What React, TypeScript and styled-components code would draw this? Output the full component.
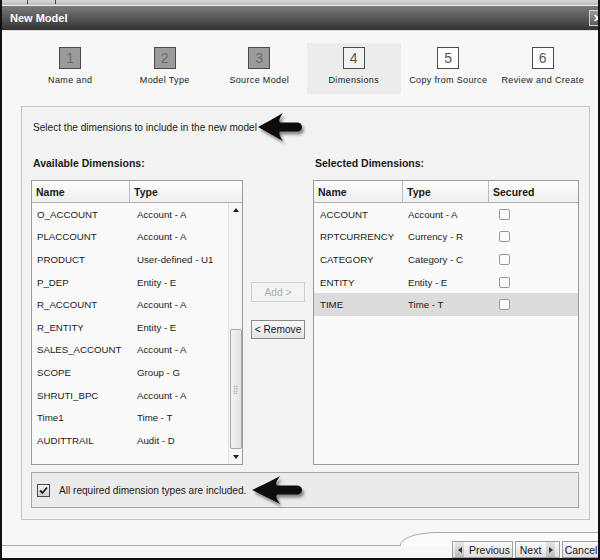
import React from 'react';
import styled, { createGlobalStyle } from 'styled-components';

const GlobalStyle = createGlobalStyle`
  html, body { margin: 0; padding: 0; background: #ffffff; }
  body { font-family: "Liberation Sans", Arial, sans-serif; }
  * { box-sizing: border-box; }
`;

const Window = styled.div`
  width: 600px;
  height: 560px;
  display: flex;
  flex-direction: column;
  overflow: hidden;
  background: #f7f7f7;
  border-left: 2px solid #111;
  border-right: 2px solid #111;
  border-bottom: 2px solid #111;
`;

const TopStrip = styled.div`
  height: 6px;
  flex: 0 0 6px;
  background: linear-gradient(#d6d6d6, #bcbcbc);
  border-bottom: 1px solid #eeeeee;
  display: flex;
  gap: 27px;
  padding-left: 25px;
`;

const Tick = styled.span`
  width: 1px;
  height: 4px;
  background: #444;
`;

const TitleBar = styled.div`
  height: 25px;
  flex: 0 0 25px;
  background: linear-gradient(#7a7a7a, #333333);
  display: flex;
  align-items: center;
  justify-content: space-between;
  padding-left: 8px;
  border-bottom: 1px solid #dddddd;
`;

const Title = styled.span`
  color: #ffffff;
  font-weight: bold;
  font-size: 11px;
`;

const CloseButton = styled.span`
  width: 16px;
  height: 16px;
  margin-right: -7px;
  border: 1px solid #cfcfcf;
  background: linear-gradient(#9a9a9a, #5a5a5a);
  color: #ffffff;
  font-weight: bold;
  font-size: 11px;
  display: flex;
  align-items: center;
  justify-content: center;
`;

const StepsRow = styled.div`
  flex: 0 0 75px;
  display: grid;
  grid-template-columns: repeat(6, 94.5px);
  padding: 12px 0 12px 21px;
`;

const Step = styled.div<{ $active?: boolean }>`
  display: flex;
  flex-direction: column;
  align-items: center;
  padding-top: 4px;
  background: ${(p) => (p.$active ? '#ececec' : 'transparent')};
`;

const StepBox = styled.div<{ $state: 'done' | 'current' | 'todo' }>`
  width: 22px;
  height: 22px;
  border: 1px solid #4a4a4a;
  display: flex;
  align-items: center;
  justify-content: center;
  font-size: 14px;
  background: ${(p) => (p.$state === 'done' ? '#9b9b9b' : p.$state === 'current' ? '#f2f2f2' : '#ffffff')};
  color: ${(p) => (p.$state === 'done' ? '#6a6a6a' : '#555555')};
`;

const StepLabel = styled.div`
  margin-top: 6px;
  font-size: 9px;
  letter-spacing: 0.35px;
  color: #222;
  white-space: nowrap;
`;

const Panel = styled.div`
  flex: 0 0 414px;
  margin: 0 8px 0 19px;
  border: 1px solid #c6c6c6;
  background: #f3f3f3;
  padding: 13px 10px 11px 9px;
  display: flex;
  flex-direction: column;
`;

const IntroRow = styled.div`
  height: 14px;
  display: flex;
  align-items: center;
  padding-left: 2px;
`;

const IntroText = styled.span`
  font-size: 10.1px;
  color: #1a1a1a;
  white-space: nowrap;
`;

const ArrowMark = styled.svg<{ $gap: number }>`
  flex: 0 0 auto;
  margin-left: ${(p) => p.$gap}px;
  filter: drop-shadow(2px 3px 1.5px rgba(0, 0, 0, 0.45));
  overflow: visible;
`;

const Columns = styled.div`
  display: flex;
  margin-top: 22px;
`;

const Col = styled.div`
  display: flex;
  flex-direction: column;
`;

const Heading = styled.div`
  height: 14px;
  line-height: 14px;
  margin-bottom: 10px;
  padding-left: 2px;
  font-size: 10.5px;
  font-weight: bold;
  color: #1a1a1a;
`;

const TableBox = styled.div<{ $w: number }>`
  width: ${(p) => p.$w}px;
  height: 285px;
  border: 1px solid #9a9a9a;
  background: #fafafa;
  display: flex;
  flex-direction: column;
`;

const HeaderRow = styled.div<{ $cols: string }>`
  display: grid;
  grid-template-columns: ${(p) => p.$cols};
  height: 22px;
  flex: 0 0 22px;
  border-bottom: 1px solid #b0b0b0;
  background: linear-gradient(#fdfdfd, #efefef);
`;

const HeaderCell = styled.div`
  display: flex;
  align-items: center;
  padding-left: 4px;
  font-size: 10.5px;
  font-weight: bold;
  color: #1a1a1a;
  border-right: 1px solid #bdbdbd;
  &:last-child { border-right: none; }
`;

const TableBody = styled.div`
  flex: 1;
  display: flex;
  min-height: 0;
`;

const RowList = styled.div`
  flex: 1;
  display: flex;
  flex-direction: column;
`;

const DataRow = styled.div<{ $cols: string; $selected?: boolean }>`
  display: grid;
  grid-template-columns: ${(p) => p.$cols};
  height: 22.6px;
  flex: 0 0 22.6px;
  align-items: center;
  background: ${(p) => (p.$selected ? '#dcdcdc' : 'transparent')};
`;

const Cell = styled.div<{ $pad?: number }>`
  padding-left: ${(p) => p.$pad ?? 6}px;
  font-size: 9.7px;
  color: #1a1a1a;
  white-space: nowrap;
  display: flex;
  align-items: center;
`;

const Scrollbar = styled.div`
  width: 14px;
  flex: 0 0 14px;
  border-left: 1px solid #e2e2e2;
  background: #f6f6f6;
  display: flex;
  flex-direction: column;
  align-items: center;
`;

const ScrollArrow = styled.div<{ $down?: boolean }>`
  flex: 0 0 14px;
  display: flex;
  align-items: center;
  justify-content: center;
  &::after {
    content: '';
    border-left: 3.5px solid transparent;
    border-right: 3.5px solid transparent;
    ${(p) => (p.$down ? 'border-top: 4px solid #222;' : 'border-bottom: 4px solid #222;')}
  }
`;

const Track = styled.div`
  flex: 1;
  width: 100%;
  display: flex;
  flex-direction: column;
  align-items: center;
`;

const Thumb = styled.div`
  margin-top: 112px;
  width: 12px;
  height: 120px;
  border: 1px solid #a8a8a8;
  border-radius: 2px;
  background: linear-gradient(90deg, #f4f4f4, #e2e2e2);
  display: flex;
  align-items: center;
  justify-content: center;
`;

const Grip = styled.div`
  width: 5px;
  height: 9px;
  background-image: radial-gradient(circle, #9a9a9a 0.7px, transparent 0.9px);
  background-size: 2.5px 2.5px;
`;

const Middle = styled.div`
  width: 70px;
  display: flex;
  flex-direction: column;
  align-items: center;
  padding-top: 126px;
  gap: 18px;
`;

const ActionButton = styled.button<{ $disabled?: boolean }>`
  width: 54px;
  height: ${(p) => (p.$disabled ? 20 : 19)}px;
  padding: 0;
  font-family: "Liberation Sans", Arial, sans-serif;
  font-size: 10.2px;
  color: ${(p) => (p.$disabled ? '#adadad' : '#1a1a1a')};
  border: 1px solid ${(p) => (p.$disabled ? '#d0d0d0' : '#8a8a8a')};
  background: ${(p) => (p.$disabled ? '#f4f4f4' : 'linear-gradient(#f8f8f8, #e4e4e4)')};
  border-radius: 0;
`;

const SmallCheck = styled.span`
  width: 11px;
  height: 11px;
  border: 1px solid #9a9a9a;
  border-radius: 2px;
  background: #fbfbfb;
`;

const CheckBar = styled.div`
  margin-top: 7px;
  height: 36px;
  border: 1px solid #a5a5a5;
  background: #ebebeb;
  display: flex;
  align-items: center;
  padding-left: 5px;
`;

const BigCheck = styled.span`
  width: 13px;
  height: 13px;
  border: 1px solid #4a4a4a;
  background: linear-gradient(#f2f2f2, #cfcfcf);
  display: flex;
  align-items: center;
  justify-content: center;
  margin-right: 9px;
`;

const CheckText = styled.span`
  font-size: 10.1px;
  color: #1a1a1a;
  white-space: nowrap;
`;

const Footer = styled.div`
  flex: 1;
  display: flex;
  flex-direction: column;
  padding-top: 12px;
`;

const TabLine = styled.div`
  height: 14px;
  display: flex;
`;

const TabLeft = styled.div`
  flex: 0 0 398px;
  border-bottom: 1px solid #aaaaaa;
`;

const TabRight = styled.div`
  flex: 1;
  border-top: 1px solid #aaaaaa;
  border-left: 1px solid #aaaaaa;
  border-top-left-radius: 38px 13px;
  background: #fbfbfb;
`;

const ButtonRow = styled.div`
  margin-top: -5px;
  height: 17px;
  display: flex;
  justify-content: flex-end;
  gap: 2px;
  margin-right: -2px;
`;

const NavButton = styled.button<{ $w: number }>`
  width: ${(p) => p.$w}px;
  height: 17px;
  padding: 0;
  border: 1px solid #a0a0a0;
  background: linear-gradient(#fbfbfb, #dedede);
  font-family: "Liberation Sans", Arial, sans-serif;
  font-size: 10.5px;
  color: #1a1a1a;
  display: flex;
  align-items: center;
  justify-content: center;
  gap: 5px;
`;

const NavIcon = styled.span<{ $right?: boolean }>`
  width: 9px;
  height: 15px;
  background: linear-gradient(#e6e6e6, #bdbdbd);
  display: flex;
  align-items: center;
  justify-content: center;
  &::after {
    content: '';
    border-top: 3.5px solid transparent;
    border-bottom: 3.5px solid transparent;
    ${(p) => (p.$right ? 'border-left: 4px solid #333;' : 'border-right: 4px solid #333;')}
  }
`;

const Arrow = ({ w, gap }: { w: number; gap: number }) => (
  <ArrowMark $gap={gap} width={w} height={28} viewBox="0 0 46 28" preserveAspectRatio="none">
    <path
      d="M0 14 C8 10 17 5 26 0 C22.5 5 21.5 8 23 9.5 L41 9.5 C44 9.5 46 11.5 46 14 C46 16.5 44 18.5 41 18.5 L23 18.5 C21.5 20 22.5 23 26 28 C17 23 8 18 0 14 Z"
      fill="#0d0d0d"
    />
  </ArrowMark>
);

const steps: { n: number; label: string; state: 'done' | 'current' | 'todo' }[] = [
  { n: 1, label: 'Name and', state: 'done' },
  { n: 2, label: 'Model Type', state: 'done' },
  { n: 3, label: 'Source Model', state: 'done' },
  { n: 4, label: 'Dimensions', state: 'current' },
  { n: 5, label: 'Copy from Source', state: 'todo' },
  { n: 6, label: 'Review and Create', state: 'todo' },
];

const available = [
  ['O_ACCOUNT', 'Account - A'],
  ['PLACCOUNT', 'Account - A'],
  ['PRODUCT', 'User-defined - U1'],
  ['P_DEP', 'Entity - E'],
  ['R_ACCOUNT', 'Account - A'],
  ['R_ENTITY', 'Entity - E'],
  ['SALES_ACCOUNT', 'Account - A'],
  ['SCOPE', 'Group - G'],
  ['SHRUTI_BPC', 'Account - A'],
  ['Time1', 'Time - T'],
  ['AUDITTRAIL', 'Audit - D'],
];

const selected = [
  ['ACCOUNT', 'Account - A'],
  ['RPTCURRENCY', 'Currency - R'],
  ['CATEGORY', 'Category - C'],
  ['ENTITY', 'Entity - E'],
  ['TIME', 'Time - T'],
];

const leftCols = '98px 1fr';
const rightCols = '89px 86px 1fr';

export default function App() {
  return (
    <>
      <GlobalStyle />
      <Window>
        <TopStrip>
          <Tick />
          <Tick />
        </TopStrip>
        <TitleBar>
          <Title>New Model</Title>
          <CloseButton>✕</CloseButton>
        </TitleBar>
        <StepsRow>
          {steps.map((s) => (
            <Step key={s.n} $active={s.state === 'current'}>
              <StepBox $state={s.state}>{s.n}</StepBox>
              <StepLabel>{s.label}</StepLabel>
            </Step>
          ))}
        </StepsRow>
        <Panel>
          <IntroRow>
            <IntroText>Select the dimensions to include in the new model</IntroText>
            <Arrow w={44} gap={1} />
          </IntroRow>
          <Columns>
            <Col>
              <Heading>Available Dimensions:</Heading>
              <TableBox $w={212}>
                <HeaderRow $cols={leftCols}>
                  <HeaderCell>Name</HeaderCell>
                  <HeaderCell>Type</HeaderCell>
                </HeaderRow>
                <TableBody>
                  <RowList>
                    {available.map(([n, t]) => (
                      <DataRow key={n} $cols="99px 1fr">
                        <Cell $pad={5}>{n}</Cell>
                        <Cell $pad={6}>{t}</Cell>
                      </DataRow>
                    ))}
                  </RowList>
                  <Scrollbar>
                    <ScrollArrow />
                    <Track>
                      <Thumb>
                        <Grip />
                      </Thumb>
                    </Track>
                    <ScrollArrow $down />
                  </Scrollbar>
                </TableBody>
              </TableBox>
            </Col>
            <Middle>
              <ActionButton $disabled>Add &gt;</ActionButton>
              <ActionButton>&lt; Remove</ActionButton>
            </Middle>
            <Col>
              <Heading>Selected Dimensions:</Heading>
              <TableBox $w={266}>
                <HeaderRow $cols={rightCols}>
                  <HeaderCell>Name</HeaderCell>
                  <HeaderCell>Type</HeaderCell>
                  <HeaderCell>Secured</HeaderCell>
                </HeaderRow>
                <RowList>
                  {selected.map(([n, t]) => (
                    <DataRow key={n} $cols={rightCols} $selected={n === 'TIME'}>
                      <Cell $pad={6}>{n}</Cell>
                      <Cell $pad={5}>{t}</Cell>
                      <Cell $pad={10}>
                        <SmallCheck />
                      </Cell>
                    </DataRow>
                  ))}
                </RowList>
              </TableBox>
            </Col>
          </Columns>
          <CheckBar>
            <BigCheck>
              <svg width="9" height="9" viewBox="0 0 9 9">
                <path d="M1 4.5 L3.5 7 L8 1.5" fill="none" stroke="#222" strokeWidth="1.8" />
              </svg>
            </BigCheck>
            <CheckText>All required dimension types are included.</CheckText>
            <Arrow w={50} gap={6} />
          </CheckBar>
        </Panel>
        <Footer>
          <TabLine>
            <TabLeft />
            <TabRight />
          </TabLine>
          <ButtonRow>
            <NavButton $w={61}>
              <NavIcon />
              Previous
            </NavButton>
            <NavButton $w={45}>
              Next
              <NavIcon $right />
            </NavButton>
            <NavButton $w={38}>Cancel</NavButton>
          </ButtonRow>
        </Footer>
      </Window>
    </>
  );
}
